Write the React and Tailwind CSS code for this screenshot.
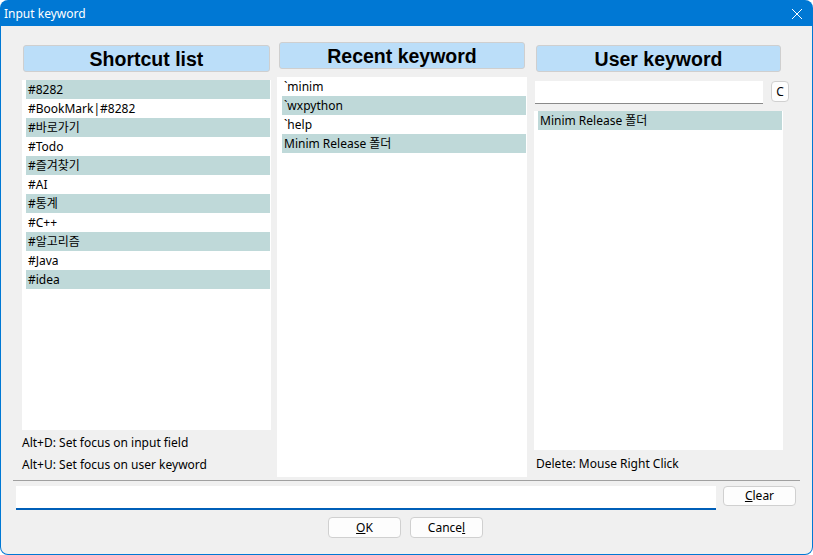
const shortcuts = ["#8282", "#BookMark|#8282", "#바로가기", "#Todo", "#즐겨찾기", "#AI", "#통계", "#C++", "#알고리즘", "#Java", "#idea"];
const recent = ["`minim", "`wxpython", "`help", "Minim Release 폴더"];
const userKw = ["Minim Release 폴더"];

function Header({ children, className = "" }) {
  return (
    <div
      className={`h-[27px] bg-[#bbdef9] border border-[#cfcfcf] rounded-[3px] flex items-center justify-center pt-[2px] font-['Liberation_Sans',Arial,sans-serif] font-bold text-[19.5px] text-black ${className}`}
    >
      {children}
    </div>
  );
}

function Row({ text, striped }) {
  return (
    <div className={`h-[19px] flex items-center pl-[2px] text-[12px] ${striped ? "bg-[#bfd9d9]" : ""}`}>{text}</div>
  );
}

function Button({ children, className = "" }) {
  return (
    <div className={`h-[20px] bg-[#fdfdfd] border border-[#d0d0d0] rounded-[4px] flex items-center justify-center text-[12px] ${className}`}>
      {children}
    </div>
  );
}

export default function App() {
  return (
    <div className="w-[813px] h-[555px] bg-[#0078d4] rounded-t-[8px] rounded-b-[8px] p-px flex flex-col font-['Noto_Sans','Noto_Sans_CJK_KR',sans-serif] text-black">
      <div className="h-[25px] flex items-center justify-between text-white text-[12px]">
        <span className="pl-[3px]">Input keyword</span>
        <svg width="12" height="12" viewBox="0 0 12 12" className="mr-[9px]">
          <path d="M1 1 L11 11 M11 1 L1 11" stroke="white" strokeWidth="1" />
        </svg>
      </div>
      <div className="flex-1 bg-[#f0f0f0] rounded-b-[7px] flex flex-col">
        <div className="flex items-start pt-[16px] pl-[21px]">
          <div className="w-[249px] shrink-0 mt-[3px] flex flex-col">
            <Header className="mx-[1px]">Shortcut list</Header>
            <div className="mt-[8px] h-[350px] bg-white pl-[4px] pr-[1px]">
              {shortcuts.map((s, i) => (
                <Row key={s} text={s} striped={i % 2 === 0} />
              ))}
            </div>
            <div className="text-[12px] leading-[22px] mt-[2px]">
              <div>Alt+D: Set focus on input field</div>
              <div>Alt+U: Set focus on user keyword</div>
            </div>
          </div>
          <div className="w-[250px] shrink-0 ml-[6px] flex flex-col">
            <Header className="mx-[2px]">Recent keyword</Header>
            <div className="mt-[8px] h-[400px] bg-white pl-[5px] pr-[1px]">
              {recent.map((s, i) => (
                <Row key={s} text={s} striped={i % 2 === 1} />
              ))}
            </div>
          </div>
          <div className="w-[249px] shrink-0 ml-[7px] mt-[3px] flex flex-col">
            <Header className="mx-[2px]">User keyword</Header>
            <div className="mt-[9px] flex items-start">
              <div className="shrink-0 ml-px w-[228px] h-[23px] bg-white border-b border-[#8a8a8a]" />
              <Button className="shrink-0 ml-[8px] w-[18px] h-[21px]">C</Button>
            </div>
            <div className="mt-[7px] h-[339px] bg-white pl-[4px] pr-[1px]">
              {userKw.map((s) => (
                <Row key={s} text={s} striped />
              ))}
            </div>
            <div className="text-[12px] leading-[22px] mt-[3px] ml-[2px]">Delete: Mouse Right Click</div>
          </div>
        </div>
        <div className="mt-[3px] ml-[12px] mr-[12px] border-t border-[#a0a0a0]" />
        <div className="flex items-start mt-[5px] pl-[15px]">
          <div className="shrink-0 w-[700px] h-[24px] bg-white border-b-2 border-[#005fb8]" />
          <Button className="shrink-0 ml-[7px] w-[73px]">
            <span><span className="underline">C</span>lear</span>
          </Button>
        </div>
        <div className="flex justify-center gap-[9px] mt-[7px] pr-[2px]">
          <Button className="w-[73px] h-[21px]">
            <span><span className="underline">O</span>K</span>
          </Button>
          <Button className="w-[73px] h-[21px]">
            <span>Cance<span className="underline">l</span></span>
          </Button>
        </div>
      </div>
    </div>
  );
}
